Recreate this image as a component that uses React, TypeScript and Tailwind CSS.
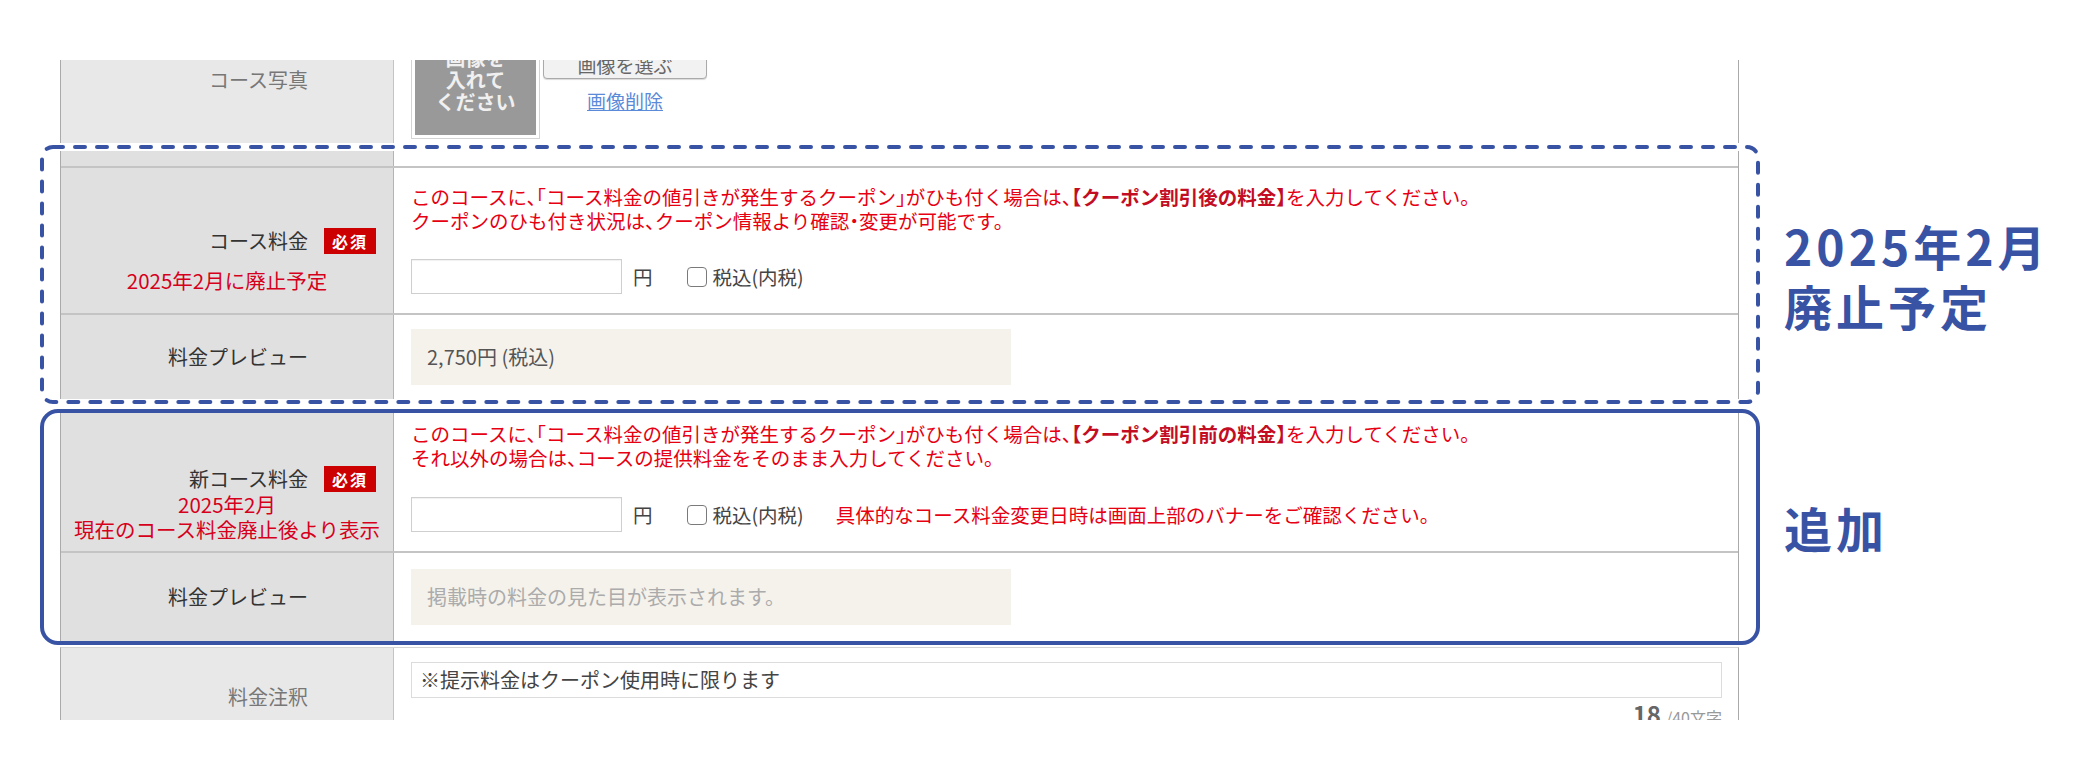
import React from 'react';

const BLUE = '#3953a4';

const Badge = () => (
  <span className="inline-flex h-[26px] w-[52px] items-center justify-center bg-[#cc0000] text-[16px] font-bold leading-none tracking-[2px] text-white">
    必須
  </span>
);

const LabelTitle = ({ text, badge, dim }: { text: string; badge?: boolean; dim?: boolean }) => (
  <div className="flex items-center justify-end gap-[16px] pr-[17px]">
    <span className={`text-[20px] leading-[26px] ${dim ? 'text-[#777]' : 'text-[#333]'}`}>{text}</span>
    {badge ? <Badge /> : <span className="w-[52px]" />}
  </div>
);

const PriceInput = ({ note }: { note?: string }) => (
  <div className="flex items-center text-[19.5px] leading-[24px] text-[#444]">
    <div className="h-[35px] w-[211px] border border-[#cfcfcf] bg-white shadow-[inset_0_1px_1px_rgba(0,0,0,0.06)]" />
    <span className="ml-[11px]">円</span>
    <span className="ml-[34px] h-[20px] w-[20px] rounded-[4px] border-[1.5px] border-[#7a7a7a] bg-white" />
    <span className="ml-[6px]">税込(内税)</span>
    {note && <span className="ml-[32px] text-[#e60012]">{note}</span>}
  </div>
);

const PreviewRow = ({ value, placeholder, height }: { value: string; placeholder?: boolean; height: string }) => (
  <div className={`flex border-t-2 border-[#c4c4c4] ${height}`}>
    <div className="flex w-[333px] shrink-0 items-center justify-end border-r border-[#b4b4b4] bg-[#e0e0e0]">
      <div className="w-full">
        <LabelTitle text="料金プレビュー" />
      </div>
    </div>
    <div className="flex flex-1 items-center bg-white pl-[17px]">
      <div
        className={`flex h-[56px] w-[600px] items-center bg-[#f5f2ec] pl-[16px] text-[20px] ${
          placeholder ? 'text-[#ababab]' : 'text-[#555]'
        }`}
      >
        {value}
      </div>
    </div>
  </div>
);

const DashedBox = ({ children }: { children: React.ReactNode }) => (
  <div className="relative h-[259px] w-[1720px] pl-[20px] pr-[21px] pt-[6px]">
    {children}
    <svg className="pointer-events-none absolute inset-0" width="1720" height="259" viewBox="0 0 1720 259">
      <rect
        x="2"
        y="2"
        width="1716"
        height="255"
        rx="11"
        fill="none"
        stroke={BLUE}
        strokeWidth="4"
        strokeDasharray="10 12"
        strokeLinecap="round"
      />
    </svg>
  </div>
);

const Annotation = ({ lines }: { lines: string[] }) => (
  <div className="ml-[24px] text-[48px] font-bold leading-[60px] tracking-[4px] text-[#3953a4]">
    {lines.map((l) => (
      <div key={l}>{l}</div>
    ))}
  </div>
);

export default function App() {
  return (
    <div className="h-[780px] w-[2080px] overflow-hidden bg-white pl-[40px] pt-[60px] font-['Noto_Sans_CJK_JP','Noto_Sans',sans-serif] [font-feature-settings:'halt']">
      {/* photo row, cut at the top */}
      <div className="ml-[20px] h-[83px] overflow-hidden">
        <div className="mt-[-60px] flex h-[143px] w-[1679px] border-x border-[#aaa]">
          <div className="w-[333px] shrink-0 border-r border-[#c4c4c4] bg-[#e8e8e8] pt-[67px]">
            <LabelTitle text="コース写真" dim />
          </div>
          <div className="flex flex-1 items-start bg-white pl-[17px]">
            <div className="mt-[10px] h-[129px] w-[129px] border border-[#d4d4d4] p-[3px]">
              <div className="flex h-full flex-col items-center justify-center bg-[#999] pt-[10px] text-[20px] font-bold leading-[22px] text-[#f0f0f0]">
                <span>画像を</span>
                <span>入れて</span>
                <span>ください</span>
              </div>
            </div>
            <div className="ml-[3px] flex flex-col items-center">
              <div className="mt-[51px] flex h-[28px] w-[164px] items-center justify-center rounded-[4px] border border-[#aaa] bg-[#f2f2f2] text-[19px] text-[#666] shadow-[0_1px_1px_rgba(0,0,0,0.15)]">
                画像を選ぶ
              </div>
              <a className="mt-[10px] text-[19px] leading-[24px] text-[#5b8ad8] underline">画像削除</a>
            </div>
          </div>
        </div>
      </div>

      {/* current fee, to be removed */}
      <div className="mt-[2px] flex items-center">
        <DashedBox>
          <div className="w-[1679px] border-x border-[#aaa]">
            <div className="flex h-[15px]">
              <div className="w-[333px] shrink-0 border-r border-[#b4b4b4] bg-[#e0e0e0]" />
              <div className="flex-1 bg-white" />
            </div>
            <div className="flex h-[147px] border-t-2 border-[#c4c4c4]">
              <div className="w-[333px] shrink-0 border-r border-[#b4b4b4] bg-[#e0e0e0] pt-[60px]">
                <LabelTitle text="コース料金" badge />
                <p className="mt-[14px] text-center text-[20.5px] leading-[24px] text-[#d6001c]">2025年2月に廃止予定</p>
              </div>
              <div className="flex-1 bg-white pl-[17px] pt-[17px]">
                <p className="text-[19.5px] leading-[24px] text-[#e60012]">
                  このコースに、「コース料金の値引きが発生するクーポン」がひも付く場合は、
                  <b className="font-bold text-[#c30d23]">【クーポン割引後の料金】</b>
                  を入力してください。
                  <br />
                  クーポンのひも付き状況は、クーポン情報より確認・変更が可能です。
                </p>
                <div className="mt-[26px]">
                  <PriceInput />
                </div>
              </div>
            </div>
            <PreviewRow value="2,750円 (税込)" height="h-[86px]" />
          </div>
        </DashedBox>
        <Annotation lines={['2025年2月', '廃止予定']} />
      </div>

      {/* new fee, added */}
      <div className="mt-[5px] flex items-center">
        <div className="h-[236px] w-[1720px] rounded-[18px] border-4 border-[#3953a4] pl-[16px] pr-[17px]">
          <div className="w-[1679px] border-x border-[#aaa]">
            <div className="flex h-[138px]">
              <div className="w-[333px] shrink-0 border-r border-[#b4b4b4] bg-[#e0e0e0] pt-[53px]">
                <LabelTitle text="新コース料金" badge />
                <p className="text-center text-[20.5px] leading-[25px] text-[#d6001c]">
                  2025年2月
                  <br />
                  現在のコース料金廃止後より表示
                </p>
              </div>
              <div className="flex-1 bg-white pl-[17px] pt-[9px]">
                <p className="text-[19.5px] leading-[24px] text-[#e60012]">
                  このコースに、「コース料金の値引きが発生するクーポン」がひも付く場合は、
                  <b className="font-bold text-[#c30d23]">【クーポン割引前の料金】</b>
                  を入力してください。
                  <br />
                  それ以外の場合は、コースの提供料金をそのまま入力してください。
                </p>
                <div className="mt-[27px]">
                  <PriceInput note="具体的なコース料金変更日時は画面上部のバナーをご確認ください。" />
                </div>
              </div>
            </div>
            <PreviewRow value="掲載時の料金の見た目が表示されます。" placeholder height="h-[90px]" />
          </div>
        </div>
        <Annotation lines={['追加']} />
      </div>

      {/* fee note row, cut at the bottom */}
      <div className="ml-[20px] mt-[2px] h-[73px] overflow-hidden">
        <div className="flex h-[120px] w-[1679px] border-x border-t border-[#aaa] border-t-[#d4d4d4]">
          <div className="w-[333px] shrink-0 border-r border-[#c4c4c4] bg-[#e8e8e8] pt-[36px]">
            <LabelTitle text="料金注釈" dim />
          </div>
          <div className="flex-1 bg-white pl-[17px] pr-[16px] pt-[14px]">
            <div className="flex h-[36px] w-full items-center border border-[#dcdcdc] pl-[8px] text-[20px] text-[#444]">
              ※提示料金はクーポン使用時に限ります
            </div>
            <div className="mt-[4px] text-right leading-[24px]">
              <span className="text-[24px] font-bold text-[#666]">18</span>
              <span className="ml-[5px] text-[16px] text-[#999]">/40文字</span>
            </div>
          </div>
        </div>
      </div>
    </div>
  );
}
